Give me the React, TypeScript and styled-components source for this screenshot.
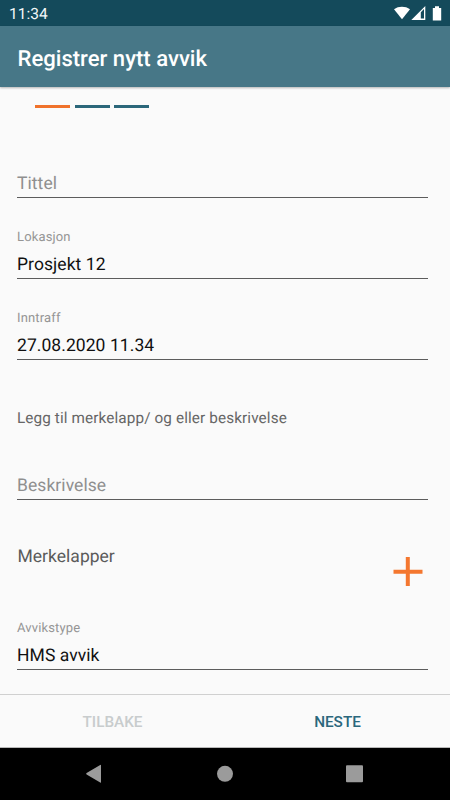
import React from "react";
import styled, { createGlobalStyle } from "styled-components";

const GlobalStyle = createGlobalStyle`
  * { box-sizing: border-box; }
  body {
    margin: 0;
    background: #fafafa;
    font-family: Roboto, sans-serif;
    text-rendering: geometricPrecision;
  }
`;

const Screen = styled.div`
  width: 450px;
  height: 800px;
  display: flex;
  flex-direction: column;
  overflow: hidden;
  background: #fafafa;
`;

const StatusBar = styled.div`
  flex: none;
  height: 26px;
  padding: 2px 8px 0 9px;
  display: flex;
  align-items: center;
  justify-content: space-between;
  background: #144a5b;
  color: #f3f7f8;
  font-size: 15.5px;
`;

const StatusIcons = styled.svg`
  display: block;
  width: 50px;
  height: 16px;
`;

const AppBar = styled.header`
  flex: none;
  height: 61px;
  padding: 5px 17.5px 0;
  display: flex;
  align-items: center;
  background: #477787;
  box-shadow: 0 1px 2px rgba(0, 0, 0, 0.28);
`;

const Title = styled.h1`
  margin: 0;
  color: #fff;
  font-size: 22.1px;
  font-weight: 500;
  white-space: nowrap;
`;

const Form = styled.main`
  flex: none;
  height: 607px;
  padding: 18px 22px 0 17px;
`;

const Steps = styled.div`
  display: flex;
  gap: 4.5px;
  height: 3px;
  padding-left: 18px;
`;

const Step = styled.span<{ $active?: boolean }>`
  width: 35px;
  height: 3px;
  background: ${(p) => (p.$active ? "#f0722b" : "#2b677a")};
`;

const Field = styled.div<{ $top: number }>`
  height: 52px;
  margin-top: ${(p) => p.$top}px;
  display: flex;
  flex-direction: column;
  justify-content: flex-end;
  border-bottom: 1px solid #5c5c5c;
`;

const Label = styled.label`
  color: #959595;
  font-size: 13px;
  line-height: 18px;
  letter-spacing: 0.15px;
`;

const Value = styled.div<{ $hint?: boolean }>`
  padding-bottom: 1px;
  color: ${(p) => (p.$hint ? "#8f8f8f" : "#111")};
  font-size: 17.5px;
  line-height: 24px;
  margin-top: 6px;
  letter-spacing: 0.06px;
`;

const Instruction = styled.p`
  margin: 47px 0 0;
  color: #666;
  font-size: 15.3px;
  line-height: 22px;
  letter-spacing: 0.11px;
`;

const Tags = styled.div`
  height: 48px;
  margin-top: 44px;
  padding-right: 5px;
  display: flex;
  justify-content: space-between;
`;

const TagsTitle = styled.span`
  padding: 1px 0 0 0.5px;
  color: #5a5a5a;
  font-size: 17.5px;
  line-height: 24px;
  letter-spacing: 0.02px;
`;

const AddButton = styled.button`
  width: 31px;
  height: 31px;
  margin-top: 13px;
  padding: 0;
  border: 0;
  background: none;
  svg { display: block; }
`;

const Actions = styled.footer`
  flex: none;
  height: 54px;
  display: grid;
  grid-template-columns: 1fr 1fr;
  border-top: 1px solid #d0d0d0;
  border-bottom: 1px solid #b8b8b8;
`;

const Action = styled.button<{ $disabled?: boolean }>`
  padding: 2px 0 0;
  border: 0;
  background: none;
  color: ${(p) => (p.$disabled ? "#c8cccd" : "#2b677c")};
  font: 500 15.3px Roboto, sans-serif;
`;

const NavBar = styled.nav`
  flex: none;
  height: 52px;
  background: #000;
  svg { display: block; }
`;

type EntryProps = { top: number; label?: string; text: string };

const Entry = ({ top, label, text }: EntryProps) => (
  <Field $top={top}>
    {label && <Label>{label}</Label>}
    <Value $hint={!label}>{text}</Value>
  </Field>
);

export default function App() {
  return (
    <Screen>
      <GlobalStyle />
      <StatusBar>
        <span>11:34</span>
        <StatusIcons viewBox="0 0 50 16" fill="#fff">
          <path d="M2 3.2C6.5-.1 13.4-.1 18 3.2L10 13.2Z" />
          <path fillRule="evenodd" d="M19.3 14 33.3 0V14ZM28.8 6.2V12.5H32V3Z" />
          <path d="M41 2.1h2V.3h4v1.8h2.2v12.4h-8.4V2.1Z" />
        </StatusIcons>
      </StatusBar>
      <AppBar>
        <Title>Registrer nytt avvik</Title>
      </AppBar>
      <Form>
        <Steps>
          <Step $active />
          <Step />
          <Step />
        </Steps>
        <Entry top={38} text="Tittel" />
        <Entry top={29} label="Lokasjon" text="Prosjekt 12" />
        <Entry top={29} label="Inntraff" text="27.08.2020 11.34" />
        <Instruction>Legg til merkelapp/ og eller beskrivelse</Instruction>
        <Entry top={19} text="Beskrivelse" />
        <Tags>
          <TagsTitle>Merkelapper</TagsTitle>
          <AddButton aria-label="Legg til">
            <svg width="31" height="31" viewBox="0 0 31 31" fill="none">
              <path d="M1.5 14.7H30.5M15.8 0V29" stroke="#f4772f" strokeWidth="4" />
            </svg>
          </AddButton>
        </Tags>
        <Entry top={26} label="Avvikstype" text="HMS avvik" />
      </Form>
      <Actions>
        <Action $disabled>TILBAKE</Action>
        <Action>NESTE</Action>
      </Actions>
      <NavBar>
        <svg width="450" height="52" viewBox="0 0 450 52" fill="#9b9b9b">
          <path d="M101 17.3V34.2Q101 35 100.2 34.5L86.6 26.5Q85.6 25.8 86.6 25.1L100.2 17Q101 16.5 101 17.3Z" />
          <circle cx="225" cy="25.8" r="8" />
          <rect x="346" y="17.3" width="17" height="17" rx="1" />
        </svg>
      </NavBar>
    </Screen>
  );
}
